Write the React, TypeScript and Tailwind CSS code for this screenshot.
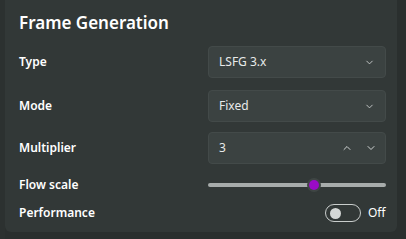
import { ChevronDown, ChevronUp } from 'lucide-react';

const FONT = { fontFamily: '"Noto Sans", "Open Sans", sans-serif' };

function Label({ children }: { children: React.ReactNode }) {
  return <span className="w-[189px] shrink-0 text-[12px] font-semibold text-white">{children}</span>;
}

function Dropdown({ value }: { value: string }) {
  return (
    <div className="flex h-[32px] w-[178px] items-center justify-between rounded-[4px] border border-[#434a49] bg-[#3b4241] pl-[10px] pr-[10px]">
      <span className="text-[12px] text-[#e8eaea]">{value}</span>
      <ChevronDown className="h-[11px] w-[11px] text-[#c8cccc]" strokeWidth={2} />
    </div>
  );
}

export default function App() {
  return (
    <div className="flex h-[239px] w-[406px] bg-[#2a2f2e]" style={FONT}>
      <div className="w-[5px] shrink-0 bg-[#2c3130]" />
      <div className="mb-[7px] mr-[9px] flex flex-1 flex-col rounded-b-[6px] bg-[#323837] pl-[14px]">
        {/* Title */}
        <h2 className="mt-[10px] h-[26px] text-[17px] font-semibold leading-[26px] text-white">
          Frame Generation
        </h2>

        {/* Type */}
        <div className="mt-[10px] flex items-center">
          <Label>Type</Label>
          <Dropdown value="LSFG 3.x" />
        </div>

        {/* Mode */}
        <div className="mt-[12px] flex items-center">
          <Label>Mode</Label>
          <Dropdown value="Fixed" />
        </div>

        {/* Multiplier */}
        <div className="mt-[10px] flex items-center">
          <Label>Multiplier</Label>
          <div className="flex h-[32px] w-[178px] items-center justify-between rounded-[4px] border border-[#434a49] bg-[#3b4241] pl-[10px] pr-[8px]">
            <span className="text-[12px] text-[#e8eaea]">3</span>
            <div className="flex items-center gap-[12px]">
              <ChevronUp className="h-[12px] w-[12px] text-[#d0d4d4]" strokeWidth={2} />
              <ChevronDown className="h-[12px] w-[12px] text-[#d0d4d4]" strokeWidth={2} />
            </div>
          </div>
        </div>

        {/* Flow scale */}
        <div className="mt-[10px] flex h-[22px] items-center">
          <Label>Flow scale</Label>
          <div className="relative flex h-[22px] w-[178px] items-center">
            <div className="h-[4px] w-full rounded-full bg-[#a7acab]" />
            <div className="absolute left-[99px] top-[4px] flex h-[14px] w-[14px] items-center justify-center rounded-full bg-[#3f4544]">
              <div className="h-[10px] w-[10px] rounded-full bg-[#9a0bc6]" />
            </div>
          </div>
        </div>

        {/* Performance */}
        <div className="mt-[6px] flex h-[22px] items-center">
          <Label>Performance</Label>
          <div className="flex w-[178px] items-center justify-end gap-[7px]">
            <div className="flex h-[18px] w-[36px] items-center rounded-full border border-[#c9cdcc] pl-[4px]">
              <div className="h-[11px] w-[11px] rounded-full bg-[#d4d7d6]" />
            </div>
            <span className="w-[18px] text-[12px] text-white">Off</span>
          </div>
        </div>
      </div>
    </div>
  );
}
